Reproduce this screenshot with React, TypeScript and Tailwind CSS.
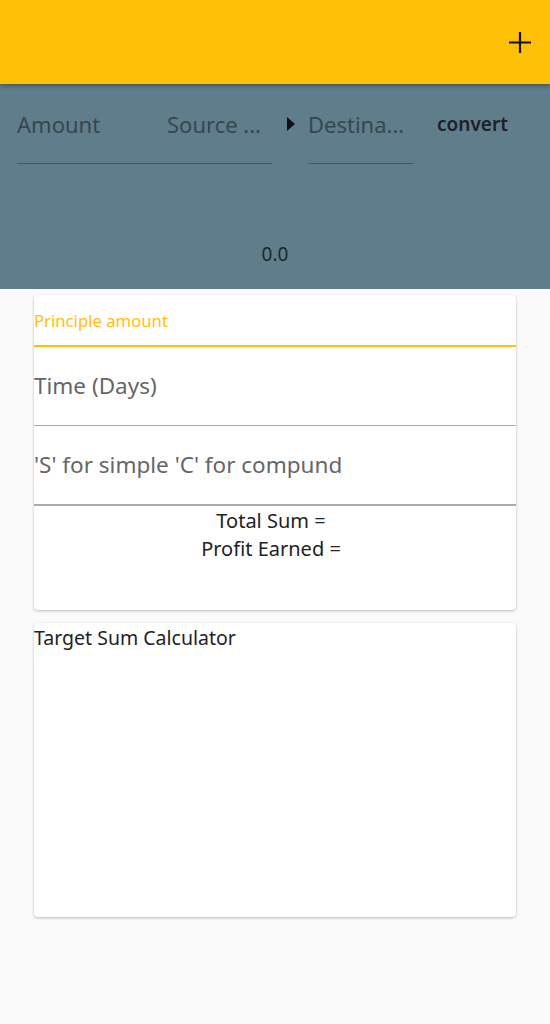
import React from "react";

export default function App() {
  const font = { fontFamily: '"Noto Sans", "Open Sans", sans-serif' };
  return (
    <div className="w-[550px] h-[1024px] bg-[#fafafa] flex flex-col" style={font}>
      <div className="relative z-10 h-[84px] bg-[#ffc107] shadow-[0_2px_4px_rgba(0,0,0,0.3)] flex items-start justify-end pr-[18px] pt-[31px]">
        <svg width="24" height="24" viewBox="0 0 24 24">
          <path d="M12 1v21M1 11.5h22" stroke="#111" strokeWidth="2.2" fill="none" />
        </svg>
      </div>
      <div className="h-[205px] bg-[#607d8b] flex flex-col">
        <div className="flex items-start pt-[22px] pl-[17px]">
          <div className="w-[255px] h-[58px] border-b border-[#44565f] flex items-start">
            <span className="w-[150px] text-[22px] leading-[36px] text-[#37474f]">Amount</span>
            <span className="text-[22px] leading-[36px] text-[#37474f]">Source ...</span>
          </div>
          <svg width="8" height="14" viewBox="0 0 8 14" className="ml-[15px] mt-[11px]">
            <path d="M0 0L8 7L0 14Z" fill="#111" />
          </svg>
          <div className="ml-[13px] w-[105px] h-[58px] border-b border-[#44565f]">
            <span className="text-[22px] leading-[36px] text-[#37474f]">Destina...</span>
          </div>
          <span className="ml-[24px] text-[19px] leading-[36px] font-semibold text-[#1c2226]">convert</span>
        </div>
        <div className="mt-[77px] text-center text-[19px] leading-[26px] text-[#1f272b]">0.0</div>
      </div>
      <div className="mx-[34px] mt-[6px] bg-white rounded-[4px] shadow-[0_1px_3px_rgba(0,0,0,0.25)] h-[315px] flex flex-col">
        <div className="h-[52px] border-b-2 border-[#ffc107] flex items-start pt-[15px]">
          <span className="text-[16.7px] leading-[22px] text-[#ffc107]">Principle amount</span>
        </div>
        <div className="h-[79px] border-b border-[#a8a8a8] flex items-center">
          <span className="text-[22.5px] text-[#666666]">Time (Days)</span>
        </div>
        <div className="h-[80px] border-b-2 border-[#ababab] flex items-center">
          <span className="text-[22.5px] text-[#666666]">'S' for simple 'C' for compund</span>
        </div>
        <div className="flex flex-col items-center pr-[8px] pt-[1px] text-[20px] leading-[28px] text-[#222]">
          <span>Total Sum =</span>
          <span>Profit Earned =</span>
        </div>
      </div>
      <div className="mx-[34px] mt-[13px] bg-white rounded-[4px] shadow-[0_1px_3px_rgba(0,0,0,0.25)] h-[294px]">
        <div className="text-[19.5px] leading-[28px] text-[#222] pt-[1px]">Target Sum Calculator</div>
      </div>
    </div>
  );
}
